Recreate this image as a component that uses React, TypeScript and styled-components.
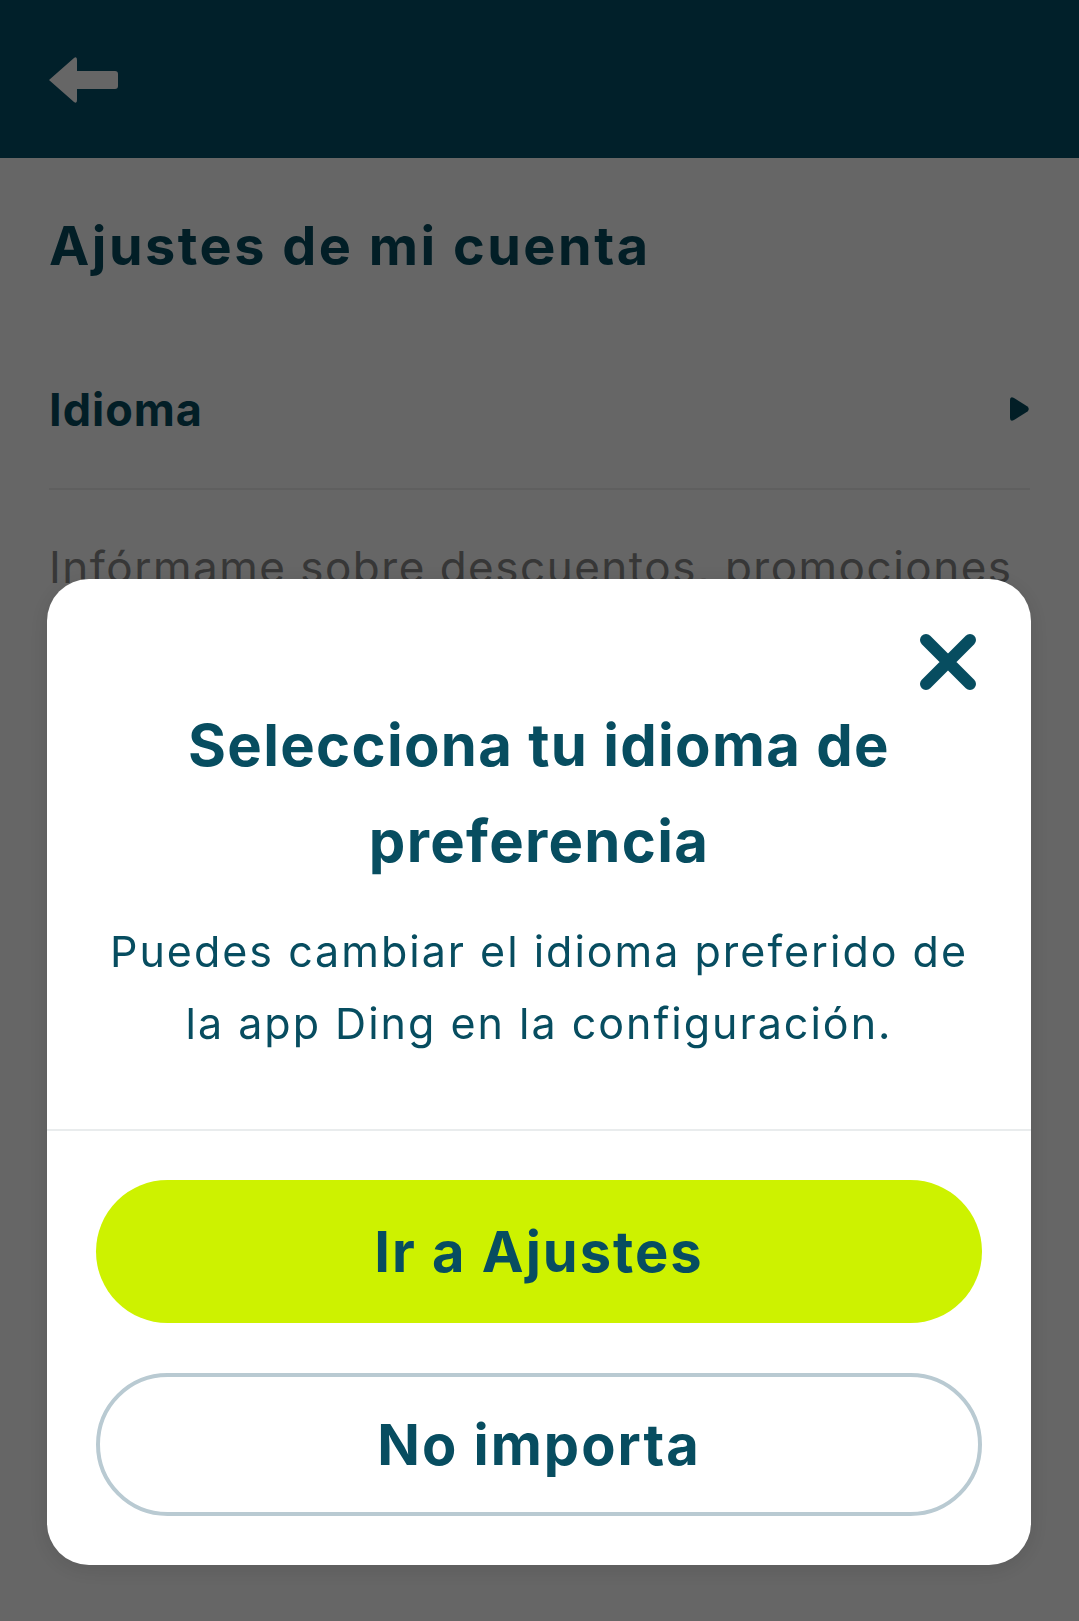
import styled, { createGlobalStyle } from 'styled-components';

const GlobalStyle = createGlobalStyle`
	html, body {
		margin: 0;
		padding: 0;
		background: #ffffff;
	}
	body {
		font-family: Inter, "Noto Sans", sans-serif;
		-webkit-font-smoothing: antialiased;
	}
	* {
		box-sizing: border-box;
	}
`;

const TEAL = '#074d60';

export default function App() {
	return (
		<>
			<GlobalStyle />
			<Page>
				<Header>
					<BackButton aria-label="Volver">
						<svg width="74" height="48" viewBox="0 0 74 48">
							<path
								d="M3 25 L28 3 Q31 1 31 5 L31 16 L69 16 Q72 16 72 19 L72 31 Q72 34 69 34 L31 34 L31 45 Q31 49 28 47 Z"
								fill="#ffffff"
							/>
						</svg>
					</BackButton>
				</Header>
				<Content>
					<PageTitle>Ajustes de mi cuenta</PageTitle>
					<SettingRow>
						<SettingLabel>Idioma</SettingLabel>
						<svg width="22" height="26" viewBox="0 0 22 26">
							<path d="M2 4 Q2 0 6 2 L19.5 10.5 Q22 13 19.5 15.5 L6 24 Q2 26 2 22 Z" fill={TEAL} />
						</svg>
					</SettingRow>
					<SettingText>Infórmame sobre descuentos, promociones y novedades de Ding</SettingText>
				</Content>
			</Page>
			<Backdrop>
				<Dialog role="dialog">
					<DialogBody>
						<CloseButton aria-label="Cerrar">
							<svg width="58" height="58" viewBox="0 0 58 58">
								<path d="M7 7 L51 51 M51 7 L7 51" stroke={TEAL} strokeWidth="12" strokeLinecap="round" />
							</svg>
						</CloseButton>
						<DialogTitle>Selecciona tu idioma de preferencia</DialogTitle>
						<DialogText>Puedes cambiar el idioma preferido de la app Ding en la configuración.</DialogText>
					</DialogBody>
					<DialogActions>
						<ActionButton $variant="primary">Ir a Ajustes</ActionButton>
						<ActionButton $variant="outline">No importa</ActionButton>
					</DialogActions>
				</Dialog>
			</Backdrop>
		</>
	);
}

const Page = styled.div`
	min-height: 1621px;
	background: #ffffff;
`;

const Header = styled.header`
	display: flex;
	align-items: center;
	height: 158px;
	padding: 0 0 0 46px;
	background-color: #03506a;
`;

const BackButton = styled.button`
	display: flex;
	padding: 0;
	border: 0;
	background: none;
	cursor: pointer;
`;

const Content = styled.main`
	display: flex;
	flex-direction: column;
	padding: 0 49px;
`;

const PageTitle = styled.h1`
	margin: 56px 0 0 0;
	font-size: 54px;
	line-height: 64px;
	font-weight: 700;
	letter-spacing: 2.5px;
	color: ${TEAL};
`;

const SettingRow = styled.div`
	display: flex;
	align-items: center;
	justify-content: space-between;
	height: 212px;
	padding-top: 52px;
	border-bottom: 2px solid #eeeeee;
`;

const SettingLabel = styled.span`
	font-size: 45px;
	font-weight: 700;
	letter-spacing: 1px;
	color: ${TEAL};
`;

const SettingText = styled.p`
	margin: 45px 0 0 0;
	font-size: 44px;
	line-height: 64px;
	letter-spacing: 1.5px;
	color: #8a8a8a;
`;

const Backdrop = styled.div`
	position: fixed;
	inset: 0;
	display: flex;
	align-items: flex-end;
	justify-content: center;
	padding: 0 48px 56px 47px;
	background: rgba(0, 0, 0, 0.6);
`;

const Dialog = styled.section`
	display: flex;
	flex-direction: column;
	width: 100%;
	background: #ffffff;
	border-radius: 42px;
	overflow: hidden;
	box-shadow: 0 4px 24px rgba(0, 0, 0, 0.12);
`;

const DialogBody = styled.div`
	display: flex;
	flex-direction: column;
	align-items: center;
	padding: 54px 54px 70px 54px;
	border-bottom: 2px solid #e9eced;
`;

const CloseButton = styled.button`
	align-self: flex-end;
	display: flex;
	padding: 0;
	border: 0;
	background: none;
	cursor: pointer;
`;

const DialogTitle = styled.h2`
	margin: 6px 0 0 0;
	max-width: 760px;
	font-size: 58px;
	line-height: 96px;
	font-weight: 700;
	text-align: center;
	letter-spacing: 1.3px;
	color: ${TEAL};
`;

const DialogText = styled.p`
	margin: 26px 0 0 0;
	max-width: 880px;
	font-size: 43px;
	line-height: 72px;
	font-weight: 400;
	text-align: center;
	letter-spacing: 2px;
	color: ${TEAL};
`;

const DialogActions = styled.div`
	display: flex;
	flex-direction: column;
	gap: 50px;
	padding: 49px;
`;

const ActionButton = styled.button<{ $variant: 'primary' | 'outline' }>`
	display: flex;
	align-items: center;
	justify-content: center;
	height: 143px;
	width: 100%;
	border-radius: 72px;
	border: ${p => p.$variant === 'outline' ? '4px solid #b9cad2' : '0'};
	background: ${p => p.$variant === 'primary' ? '#cdf200' : '#ffffff'};
	font-family: inherit;
	font-size: 56px;
	font-weight: 700;
	letter-spacing: 2px;
	color: ${TEAL};
	cursor: pointer;
`;
